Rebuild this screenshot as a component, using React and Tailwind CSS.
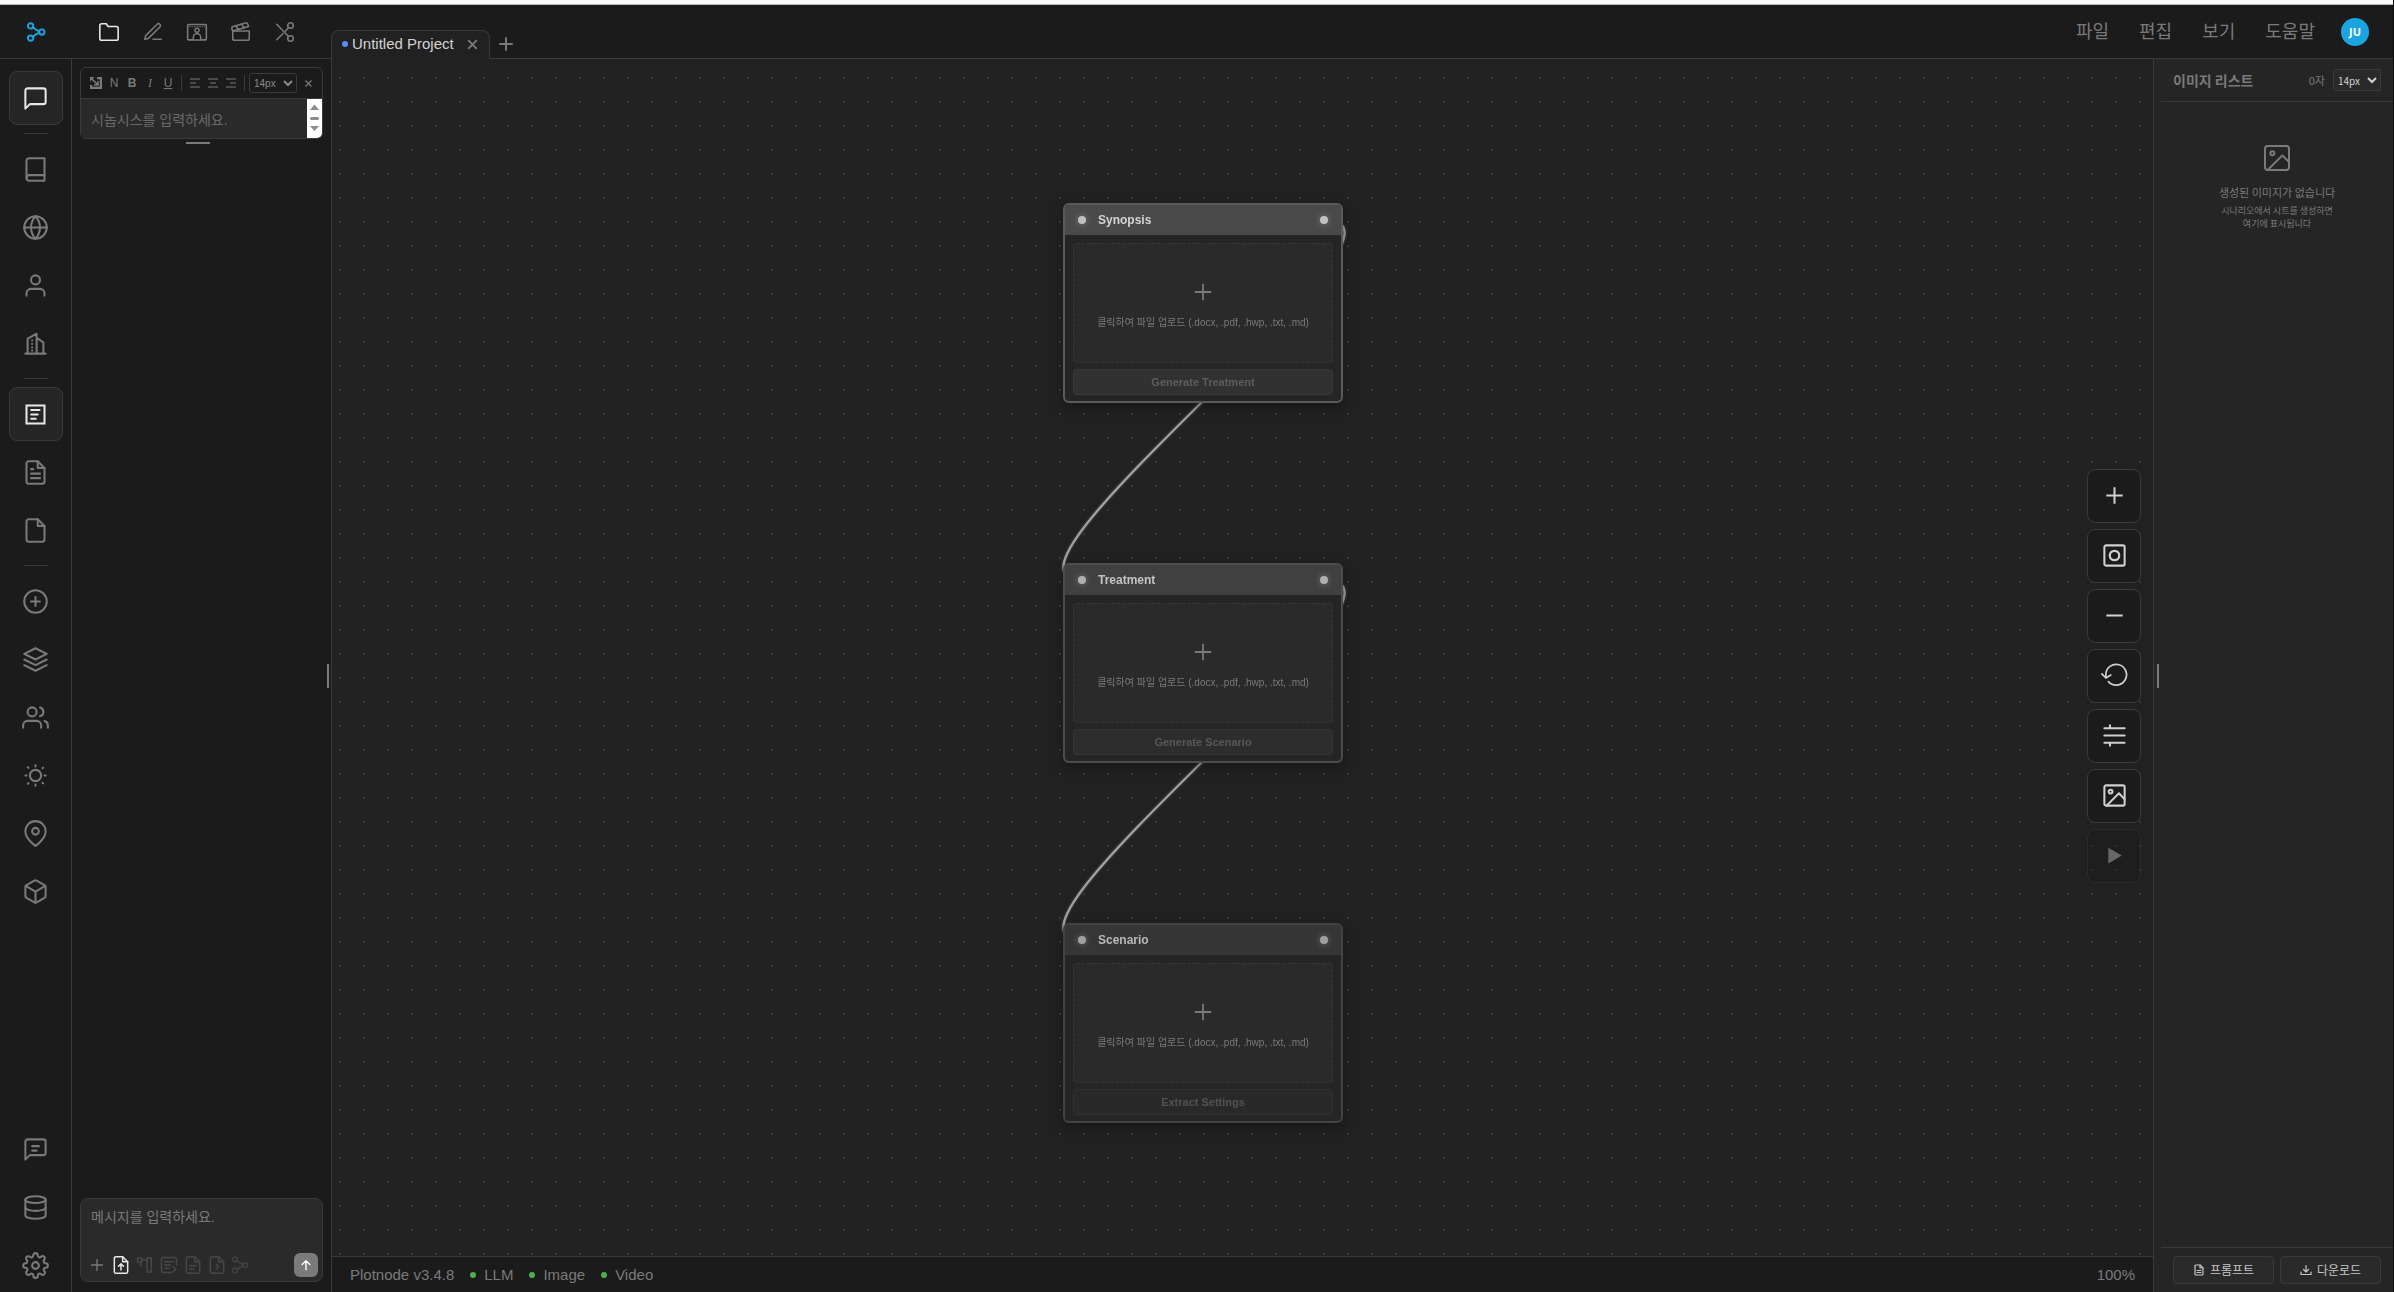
import { useState } from 'react';
import {
  FiMessageSquare, FiBook, FiGlobe, FiUser, FiFileText, FiPlusCircle, FiLayers, FiUsers,
  FiMapPin, FiBox, FiDatabase, FiSettings, FiFolder, FiEdit3, FiImage,
} from 'react-icons/fi';
import { Clapperboard } from 'lucide-react';

const Svg = ({ size = 28, strokeWidth = 1.5, children }) => (
  <svg width={size} height={size} viewBox="0 0 24 24" fill="none" stroke="currentColor" strokeWidth={strokeWidth} strokeLinecap="round" strokeLinejoin="round" aria-hidden="true">
    {children}
  </svg>
);

const PlotLogo = (props) => (
  <Svg {...props}>
    <circle cx="5.5" cy="4.7" r="3.2" />
    <circle cx="5.5" cy="19.3" r="3.2" />
    <circle cx="19" cy="12" r="3.2" />
    <path d="M8.400 6.300 12.500 9.500 16 11.200M8.400 17.700l4.100-3.200L16 12.800" />
  </Svg>
);

const Storyboard = (props) => (
  <Svg {...props}>
    <rect x="1.800" y="3.800" width="20.400" height="16.800" rx="1" />
    <path d="M3.500 6.200h17" strokeDasharray="0.800 2" strokeWidth="1" />
    <circle cx="12" cy="10.200" r="2.200" fill="#111" />
    <path d="M8 20v-2a4 4 0 0 1 8 0v2" fill="#111" />
  </Svg>
);

const Cut = (props) => (
  <Svg {...props}>
    <circle cx="18" cy="5" r="3" />
    <circle cx="18" cy="19" r="3" />
    <path d="M3 3.5 15.9 16.9M15.9 7.1 12.6 10.8M9.8 13.6 3 20.5" />
  </Svg>
);

const Building = (props) => (
  <Svg {...props}>
    <path d="M3 21h18M5 21V7.7l8-4.4V21M13 7l6 4v10" />
    <path d="M9 9.2v.2M9 12.3v.2M9 15.4v.2M9 18.3v.2" />
  </Svg>
);

const Article = (props) => (
  <Svg {...props}>
    <rect x="4" y="4" width="16" height="16" strokeLinejoin="miter" />
    <path d="M8.2 8h7.4M8.2 12h5.8M8.2 15.8h4" />
  </Svg>
);

const Page = (props) => (
  <Svg {...props}>
    <path d="M14 2H6a2 2 0 0 0-2 2v16a2 2 0 0 0 2 2h12a2 2 0 0 0 2-2V8z" />
    <path d="M14 2v6h6" />
    {props.children}
  </Svg>
);

const Sun = (props) => (
  <Svg {...props}>
    <circle cx="12" cy="12" r="5" />
    <path d="M12 3v1M12 20v1M3 12h1M20 12h1M5.2 4.6l.6.6M18.2 18.4l.6.6M5.2 19.4l.6-.6M18.2 5.6l.6-.6" />
  </Svg>
);

const Feedback = (props) => (
  <Svg {...props}>
    <path d="M21 15a2 2 0 0 1-2 2H7l-4 4V5a2 2 0 0 1 2-2h14a2 2 0 0 1 2 2z" />
    <path d="M9 9h6M9 13h4" />
  </Svg>
);

const Plus = (props) => (
  <Svg {...props}>
    <path d="M12 3v18M3 12h18" strokeLinecap="butt" />
  </Svg>
);

const Close = (props) => (
  <Svg {...props}>
    <path d="m4 4 16 16M20 4 4 20" strokeLinecap="butt" />
  </Svg>
);

const RAIL = [
  [{ label: '채팅', Icon: FiMessageSquare }],
  [
    { label: '작품', Icon: FiBook },
    { label: '세계관', Icon: FiGlobe },
    { label: '인물', Icon: FiUser },
    { label: '장소', Icon: Building },
  ],
  [
    { label: '시놉시스', Icon: Article },
    { label: '트리트먼트', Icon: FiFileText },
    { label: '시나리오', Icon: Page },
  ],
  [
    { label: '추가', Icon: FiPlusCircle },
    { label: '레이어', Icon: FiLayers },
    { label: '캐릭터', Icon: FiUsers },
    { label: '조명', Icon: Sun },
    { label: '로케이션', Icon: FiMapPin },
    { label: '소품', Icon: FiBox },
  ],
];

const RAIL_BOTTOM = [
  { label: '피드백', Icon: Feedback },
  { label: '데이터', Icon: FiDatabase },
  { label: '설정', Icon: FiSettings },
];

const MODES = [
  { label: '프로젝트', Icon: FiFolder },
  { label: '글쓰기', Icon: FiEdit3 },
  { label: '스토리보드', Icon: Storyboard },
  { label: '영상', Icon: Clapperboard },
  { label: '편집', Icon: Cut },
];

const NODES = [
  { title: 'Synopsis', action: 'Generate Treatment', pos: 'top-[-455px]', border: 'border-[#5a5a5a]', head: 'bg-[#4a4a4a] text-[#d4d4d4]', dot: 'bg-[#c0c0c0]', btn: 'bg-[#313131] border-[#3a3a3a] text-[#5e5e5e]' },
  { title: 'Treatment', action: 'Generate Scenario', pos: 'top-[-95px]', border: 'border-[#4c4c4c]', head: 'bg-[#404040] text-[#c4c4c4]', dot: 'bg-[#b0b0b0]', btn: 'bg-[#2d2d2d] border-[#353535] text-[#585858]' },
  { title: 'Scenario', action: 'Extract Settings', pos: 'top-[265px]', border: 'border-[#424242]', head: 'bg-[#363636] text-[#b8b8b8]', dot: 'bg-[#a0a0a0]', btn: 'bg-[#292929] border-[#313131] text-[#525252]' },
];

function RailButton({ label, Icon, active, onClick }) {
  return (
    <button
      aria-label={label}
      onClick={onClick}
      className={`flex size-[54px] shrink-0 items-center justify-center rounded-lg border ${active ? 'border-[#3a3a3a] bg-[#252525] text-[#e8e8e8]' : 'border-transparent text-[#7a7a7a]'}`}
    >
      <Icon size={27} strokeWidth={1.8} />
    </button>
  );
}

function Header() {
  const [mode, setMode] = useState('프로젝트');
  return (
    <header className="flex h-[54px] shrink-0 border-b border-[#3a3a3a] bg-[#1b1b1b]">
      <div className="flex w-[331px] shrink-0 items-center">
        <div className="mr-[15px] flex w-[72px] justify-center text-[#1ba5e0]">
          <PlotLogo size={20} strokeWidth={2.3} />
        </div>
        {MODES.map(({ label, Icon }) => (
          <button key={label} aria-label={label} onClick={() => setMode(label)} className={`flex h-11 w-11 items-center justify-center ${mode === label ? 'text-[#e8e8e8]' : 'text-[#7a7a7a]'}`}>
            <Icon size={22} strokeWidth={1.7} />
          </button>
        ))}
      </div>
      <div className="flex flex-1 items-end">
        <div className="-mb-px flex h-[29px] items-center rounded-t-lg border border-b-0 border-[#3a3a3a] bg-[#212121] px-2.5 pb-0.5 text-[15px] text-[#d4d4d4]">
          <span className="mr-1 size-1.5 rounded-full bg-[#5b8def]" />
          <span>Untitled Project</span>
          <button aria-label="탭 닫기" className="ml-3 text-[#7a7a7a]"><Close size={13} strokeWidth={3.4} /></button>
        </div>
        <button aria-label="새 탭" className="flex h-7 w-8 items-center justify-center text-[#7a7a7a]"><Plus size={18} strokeWidth={2.6} /></button>
      </div>
      <nav className="flex items-center gap-[30px] pr-6 text-lg text-[#7a7a7a]">
        {['파일', '편집', '보기', '도움말'].map((m) => <button key={m}>{m}</button>)}
        <button className="-ml-1 flex size-7 items-center justify-center rounded-full bg-[#1ba5e0] font-[Noto_Sans,sans-serif] text-[11px] font-bold text-white">JU</button>
      </nav>
    </header>
  );
}

function SideRail() {
  const [active, setActive] = useState(['채팅', '시놉시스']);
  const toggle = (label) => setActive(active.includes(label) ? active.filter((a) => a !== label) : [...active, label]);
  return (
    <aside className="flex w-[72px] shrink-0 flex-col items-center justify-between border-r border-[#3a3a3a] pt-3">
      <div className="flex flex-col gap-2">
        {RAIL.map((group, i) => (
          <div key={i} className="flex flex-col items-center gap-1">
            {i > 0 && <hr className="mb-1 h-px w-6 border-0 bg-[#3a3a3a]" />}
            {group.map((item) => (
              <RailButton key={item.label} {...item} active={active.includes(item.label)} onClick={() => toggle(item.label)} />
            ))}
          </div>
        ))}
      </div>
      <div className="flex flex-col gap-1">
        {RAIL_BOTTOM.map((item) => <RailButton key={item.label} {...item} />)}
      </div>
    </aside>
  );
}

function FormatBar() {
  const btn = 'flex h-5 w-[18px] items-center justify-center';
  return (
    <div className="flex h-[31px] items-center border-b border-[#3a3a3a] pl-1.5 text-xs text-[#7a7a7a]">
      <button aria-label="확장" className={btn}>
        <svg width="12" height="12" viewBox="0 0 12 12" fill="none" stroke="currentColor" strokeWidth="2.2">
          <path d="M7 1.1h3.900v9.800H1.100V8" />
          <path d="M2 2l5.500 5.500M8 4v4H4" strokeWidth="1.600" />
          <path d="M0 0h4.500L0 4.500z" fill="currentColor" stroke="none" />
        </svg>
      </button>
      <button className={btn}>N</button>
      <button className={`${btn} font-bold`}>B</button>
      <button className={`${btn} font-[Liberation_Serif,serif] italic`}>I</button>
      <button className={`${btn} underline`}>U</button>
      <span className="mx-1 h-4 w-px bg-[#3a3a3a]" />
      {['M1 2h10M1 6h6M1 10h10', 'M1 2h10M3 6h6M1 10h10', 'M1 2h10M5 6h6M1 10h10'].map((d, i) => (
        <button key={d} aria-label={['왼쪽 정렬', '가운데 정렬', '오른쪽 정렬'][i]} className={btn}>
          <svg width="12" height="12" viewBox="0 0 12 12" stroke="#5a5a5a" strokeWidth="1.5"><path d={d} /></svg>
        </button>
      ))}
      <span className="mx-1 h-4 w-px bg-[#3a3a3a]" />
      <select aria-label="글자 크기" defaultValue="14px" className="h-5 w-12 rounded-[3px] border border-[#3a3a3a] bg-[#1b1b1b] text-[10px] text-[#8a8a8a]">
        <option>12px</option>
        <option>14px</option>
        <option>16px</option>
      </select>
      <button aria-label="닫기" className="flex h-5 w-[22px] items-center justify-center"><Close size={9} strokeWidth={3} /></button>
    </div>
  );
}

const CHAT_TOOLS = [
  { label: '노드', art: <path d="M3 3.500h5v5H3zM14.500 3.500h5v17h-5zM8 6h6.500M7 8.500v5" strokeLinejoin="miter" /> },
  { label: '요약', art: <><path d="M21 12V5a2 2 0 0 0-2-2H5a2 2 0 0 0-2 2v14a2 2 0 0 0 2 2h10M7 8h10M7 12h7M7 16h5" /><path d="m17 14 3 3-3 3" /></> },
  { label: '문서', page: true, art: <path d="M8 13h8M8 17h5" /> },
  { label: '스크립트', page: true, art: <path d="m11 11 3 3-3 3" /> },
];

function ChatPanel() {
  return (
    <aside className="relative flex w-[260px] shrink-0 flex-col justify-between border-r border-[#3a3a3a] px-2 pt-2 pb-2.5">
      <div className="flex flex-col items-center">
        <div className="w-full overflow-hidden rounded-md border border-[#3a3a3a]">
          <FormatBar />
          <div className="flex h-[39px] bg-[#2a2a2a]">
            <textarea aria-label="시놉시스" placeholder="시놉시스를 입력하세요." className="min-w-0 flex-1 resize-none overflow-hidden px-2.5 pt-[11px] text-sm/5 outline-none placeholder:text-[#6a6a6a]" />
            <svg width="15" height="39" viewBox="0 0 15 39" className="bg-white" fill="#8b8b8b">
              <path d="M3 11h9L7.500 5.500zM3 27h9l-4.500 5z" />
              <rect x="3" y="18" width="9" height="3" rx="1.500" />
            </svg>
          </div>
        </div>
        <div className="mt-[3px] mr-2 h-0.5 w-6 bg-[#7a7a7a]" />
      </div>
      <div className="absolute top-1/2 right-[2px] -mt-3 h-6 w-0.5 bg-[#7a7a7a]" />
      <div className="rounded-lg border border-[#3a3a3a] bg-[#2a2a2a] pb-1">
        <textarea aria-label="메시지" placeholder="메시지를 입력하세요." className="block h-[54px] w-full resize-none px-2.5 pt-2 text-sm/5 outline-none placeholder:text-[#7a7a7a]" />
        <div className="flex items-center gap-1 pr-1 pl-1.5 text-[#474747]">
          <button aria-label="추가" className="flex size-5 items-center justify-center text-[#7a7a7a]"><Plus size={16} strokeWidth={2} /></button>
          <button aria-label="파일 업로드" className="text-[#e8e8e8]">
            <Page size={20} strokeWidth={1.8}><path d="M12 18v-7M9 13.500l3-3 3 3" /></Page>
          </button>
          {CHAT_TOOLS.map(({ label, page, art }) => (
            <button key={label} aria-label={label}>{page ? <Page size={20} strokeWidth={1.8}>{art}</Page> : <Svg size={20} strokeWidth={1.8}>{art}</Svg>}</button>
          ))}
          <button aria-label="플롯"><PlotLogo size={18} /></button>
          <button aria-label="보내기" className="ml-auto flex size-6 items-center justify-center rounded-md bg-[#7a7a7a] text-white">
            <Svg size={14} strokeWidth={2.4}><path d="M12 20V5M5.500 11 12 4.500l6.500 6.500" /></Svg>
          </button>
        </div>
      </div>
    </aside>
  );
}

function PlotNode({ title, action, pos, border, head, dot, btn }) {
  return (
    <section className={`absolute left-[-180px] w-[280px] overflow-hidden rounded-md border-2 bg-[#252525] shadow-[0_4px_12px_rgba(0,0,0,0.3)] ${pos} ${border}`}>
      <div className={`flex h-[30px] items-center px-[13px] text-xs font-bold ${head}`}>
        <span className={`mr-3 size-2 rounded-full shadow-[0_0_6px_rgba(255,255,255,0.3)] ${dot}`} />
        <h2>{title}</h2>
        <span className={`ml-auto size-2 rounded-full shadow-[0_0_6px_rgba(255,255,255,0.3)] ${dot}`} />
      </div>
      <div className="flex flex-col gap-1.5 px-2 pt-2 pb-1.5">
        <button className="flex h-[120px] flex-col items-center justify-center gap-3 rounded border border-dashed border-[#383838] bg-[#2a2a2a] pt-1 text-[10px] text-[#7a7a7a]">
          <Plus size={22} strokeWidth={2} />
          <span>클릭하여 파일 업로드 (.docx, .pdf, .hwp, .txt, .md)</span>
        </button>
        <button className={`h-[26px] rounded border text-[11px] font-bold ${btn}`}>{action}</button>
      </div>
    </section>
  );
}

// wires run from the right dot of a node to the left dot of the next one
function Wires() {
  return (
    <svg className="absolute top-[-454px] left-[-179px] overflow-visible" width="280" height="920" fill="none">
      {[16, 376].map((y) => {
        const d = `M261 ${y}C382 ${y} -102 ${y + 360} 19 ${y + 360}`;
        return (
          <g key={y}>
            <path d={d} stroke="#fff" strokeOpacity="0.05" strokeWidth="6" />
            <path d={d} stroke="#a0a0a0" strokeWidth="2.4" />
          </g>
        );
      })}
    </svg>
  );
}

const CANVAS_TOOLS = [
  { label: '확대', art: <path d="M12 4.700v14.600M4.700 12h14.600" strokeLinecap="butt" /> },
  { label: '화면 맞춤', art: <><rect x="3" y="3" width="18" height="18" rx="1.500" /><circle cx="12" cy="12" r="4.200" strokeWidth="2" /></> },
  { label: '축소', art: <path d="M4.700 12h14.600" strokeLinecap="butt" /> },
  { label: '초기화', art: <path d="M6.600 17.400A9.200 9.200 0 1 0 4.300 11.300v2.900M.8 10.500l3.500 3.700 4.400-2.700" strokeWidth="1.500" /> },
  { label: '정렬', art: <path d="M3 5.500h18M3 12h18M3 18.500h18M8 3v2.500M8 18.500V21" /> },
  { label: '이미지', art: <><rect x="3" y="3" width="18" height="18" rx="1.500" /><circle cx="8.500" cy="8.500" r="1.700" /><path d="m21 15.500-5-5.500L5 21" /></> },
  { label: '실행', disabled: true, art: <path d="M6.500 5v14L18.500 12z" fill="currentColor" stroke="none" /> },
];

function Canvas() {
  return (
    <main className="relative flex min-w-0 flex-1 flex-col">
      <div className="relative flex-1 overflow-hidden bg-[#212121] bg-[radial-gradient(circle,#3a3a3a_1px,transparent_1px)] bg-[size:24px_24px] bg-[position:-4px_7px]">
        <div className="absolute top-1/2 left-1/2 will-change-transform">
          <Wires />
          {NODES.map((node) => <PlotNode key={node.title} {...node} />)}
        </div>
      </div>
      <div className="absolute inset-y-0 right-3 flex flex-col justify-center gap-1.5">
        {CANVAS_TOOLS.map(({ label, art, disabled }) => (
          <button key={label} aria-label={label} disabled={disabled} className="flex size-[54px] items-center justify-center rounded-lg border border-[#3a3a3a] bg-[#1b1b1b] text-[#d0d0d0] disabled:opacity-40">
            <Svg size={27} strokeWidth={1.8}>{art}</Svg>
          </button>
        ))}
      </div>
      <footer className="flex h-9 shrink-0 items-center gap-4 border-t border-[#3a3a3a] px-[18px] pt-px text-[15px] text-[#7a7a7a]">
        <span>Plotnode v3.4.8</span>
        {['LLM', 'Image', 'Video'].map((s) => (
          <span key={s} className="flex items-center gap-2">
            <span className="size-1.5 rounded-full bg-[#4caf50]" />
            {s}
          </span>
        ))}
        <span className="ml-auto">100%</span>
      </footer>
    </main>
  );
}

function ImagePanel() {
  const btn = 'flex h-7 flex-1 items-center justify-center gap-[5px] rounded border border-[#3a3a3a] bg-[#2a2a2a]';
  return (
    <aside className="relative flex w-60 shrink-0 flex-col border-l border-[#3a3a3a] bg-[#252525] pl-[7px] font-[Noto_Sans_CJK_KR,sans-serif] text-[#7a7a7a]">
      <div className="absolute top-1/2 left-[3px] -mt-3 h-6 w-0.5 bg-[#7a7a7a]" />
      <div className="flex h-[43px] shrink-0 items-center border-b border-[#3a3a3a] px-3">
        <h2 className="text-sm font-bold">이미지 리스트</h2>
        <span className="mr-2 ml-auto text-[11px]">0자</span>
        <select aria-label="글자 크기" defaultValue="14px" className="h-[22px] w-12 rounded-[3px] border border-[#3a3a3a] bg-[#2a2a2a] text-[10px] text-[#d4d4d4]">
          <option>12px</option>
          <option>14px</option>
          <option>16px</option>
        </select>
      </div>
      <div className="flex flex-1 flex-col items-center pt-10 text-center">
        <FiImage size={32} strokeWidth={1.5} />
        <p className="mt-2 text-[11px]/5">생성된 이미지가 없습니다</p>
        <p className="mt-0.5 text-[9px]/[13px]">시나리오에서 시트를 생성하면<br />여기에 표시됩니다</p>
      </div>
      <div className="flex gap-1.5 border-t border-[#3a3a3a] px-3 py-2 text-xs text-[#c8c8c8]">
        <button className={btn}>
          <Page size={12} strokeWidth={2.4}><path d="M8 13h8M8 17h8" /></Page>
          프롬프트
        </button>
        <button className={btn}>
          <Svg size={12} strokeWidth={2.4}><path d="M2 16v5h20v-5M12 3v12M7 11l5 5 5-5" /></Svg>
          다운로드
        </button>
      </div>
    </aside>
  );
}

export default function App() {
  return (
    <div className="flex h-screen flex-col overflow-hidden border-r border-[#0c0c0c] bg-[#1b1b1b] font-[Liberation_Sans,Noto_Sans_CJK_KR,sans-serif]">
      <div className="h-[5px] shrink-0 border-b border-[#b8b8b8] bg-[#fafafa]" />
      <Header />
      <div className="flex min-h-0 flex-1">
        <SideRail />
        <ChatPanel />
        <Canvas />
        <ImagePanel />
      </div>
    </div>
  );
}
